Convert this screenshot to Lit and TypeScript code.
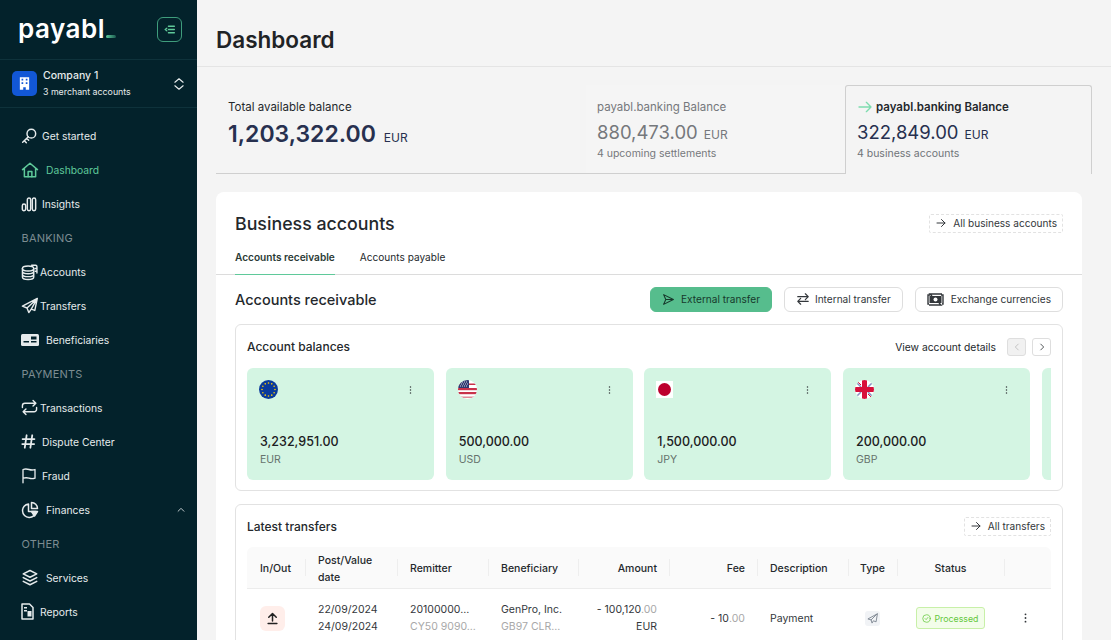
import { LitElement, html, css, svg } from 'lit'
import { customElement } from 'lit/decorators.js'

const line = (body: unknown, w = 18, h = 18, vb = '0 0 24 24', sw = 2) => html`<svg
  width=${w} height=${h} viewBox=${vb} fill="none" stroke="currentColor" stroke-width=${sw}
  stroke-linecap="round" stroke-linejoin="round">${body}</svg>`

const icons: Record<string, unknown> = {
  key: line(svg`<circle cx="15.500" cy="8.500" r="6.500"/><path d="M11 13 2.500 21.500M5 19l3 3M8.500 15.500l3 3"/>`, 16, 16, '0 0 24 24', 2.2),
  home: line(svg`<path d="M2 11.500 12 3l10 8.500M4.500 10v11h15V10"/><path d="M9.500 21v-7h5v7"/>`),
  bars: line(svg`<rect x="2" y="12" width="5" height="10" rx="2.500"/><rect x="9.500" y="3" width="5" height="19" rx="2.500"/><rect x="17" y="3" width="5" height="19" rx="2.500"/>`, 16, 16, '0 0 24 24', 2.2),
  coins: line(svg`<ellipse cx="10" cy="7" rx="8" ry="3.500"/><path d="M2 7v12c0 1.900 3.600 3.500 8 3.500s8-1.600 8-3.500V7M2 11c0 1.900 3.600 3.500 8 3.500s8-1.600 8-3.500M2 15c0 1.900 3.600 3.500 8 3.500s8-1.600 8-3.500"/><path d="M15 2.500h5.500a2 2 0 0 1 2 2v9M20 7h2.500M20 11h2.500"/>`, 17, 18),
  plane: line(svg`<path d="M23 2 2 13l6.500 2.500L11 22l3.500-5 5 2zM23 2 8.500 15.500M23 2l-8.500 15"/>`, 17, 17),
  card: html`<svg width="18" height="12" viewBox="0 0 18 12"><rect width="18" height="12" rx="1.500" fill="currentColor"/><rect x="10" y="2.500" width="5.500" height="3" fill="#03222b"/><rect x="2.500" y="7" width="5.500" height="1.500" fill="#03222b"/><rect x="10" y="7" width="5.500" height="1.500" fill="#03222b"/></svg>`,
  swap: line(svg`<path d="M2 12V9.500a3.500 3.500 0 0 1 3.500-3.500H21M17 2l4 4-4 4M22 12v2.500a3.500 3.500 0 0 1-3.500 3.500H3M7 14l-4 4 4 4"/>`, 17, 17),
  hash: line(svg`<path d="M9 2 6 22M18 2l-3 20M2.500 8h19M2 16h19"/>`, 15, 15, '0 0 24 24', 2.8),
  flag: line(svg`<path d="M3 23V3c4-1.500 6-1 9 0s5 1.500 9 0v13c-4 1.500-6 1-9 0s-5-1-9 0"/>`, 16, 17),
  pie: line(svg`<path d="M10 4a9 9 0 1 0 10 10H10z"/><path d="M14 2a8 8 0 0 1 8 8h-8z"/><path d="M14 14h8l-4 6z" fill="currentColor"/>`),
  layers: line(svg`<path d="M12 2 3 6.500l9 4.500 9-4.500zM3 11.500l9 4.500 9-4.500M3 16.500l9 4.500 9-4.500"/>`),
  doc: html`<svg width="13" height="17" viewBox="0 0 13 17"><path d="M1 1h7.500L12 4.500V16H1z" fill="none" stroke="currentColor" stroke-width="1.500" stroke-linejoin="round"/><rect x="3" y="4" width="3" height="1.500" fill="currentColor"/><rect x="3" y="7" width="3" height="1.500" fill="currentColor"/><rect x="6.500" y="8" width="4" height="5.500" fill="currentColor"/></svg>`,
}

const arrowRight = line(svg`<path d="M4 12h16M13 5l7 7-7 7"/>`, 12, 12)
const dots = (h = 8) => html`<svg width="3" height=${h} viewBox="0 0 3 11" fill="currentColor"><circle cx="1.500" cy="1.500" r="1"/><circle cx="1.500" cy="5.500" r="1"/><circle cx="1.500" cy="9.500" r="1"/></svg>`

type NavEntry = { head: string } | { icon: string; label: string; x: number; active?: boolean; chevron?: boolean }

const nav: NavEntry[] = [
  { icon: 'key', label: 'Get started', x: 42 },
  { icon: 'home', label: 'Dashboard', x: 46, active: true },
  { icon: 'bars', label: 'Insights', x: 42 },
  { head: 'BANKING' },
  { icon: 'coins', label: 'Accounts', x: 40 },
  { icon: 'plane', label: 'Transfers', x: 40 },
  { icon: 'card', label: 'Beneficiaries', x: 46 },
  { head: 'PAYMENTS' },
  { icon: 'swap', label: 'Transactions', x: 40 },
  { icon: 'hash', label: 'Dispute Center', x: 42 },
  { icon: 'flag', label: 'Fraud', x: 42 },
  { icon: 'pie', label: 'Finances', x: 46, chevron: true },
  { head: 'OTHER' },
  { icon: 'layers', label: 'Services', x: 46 },
  { icon: 'doc', label: 'Reports', x: 40 },
]

const euStars = Array.from({ length: 12 }, (_, i) => {
  const a = (i * Math.PI) / 6
  return svg`<circle cx=${9.5 + 6.5 * Math.cos(a)} cy=${9.5 + 6.5 * Math.sin(a)} r=".8" fill="#ffcc00"/>`
})

const flags: Record<string, unknown> = {
  EUR: html`<svg width="19" height="19" viewBox="0 0 19 19"><circle cx="9.500" cy="9.500" r="9.500" fill="#0a3a9c"/>${euStars}</svg>`,
  USD: html`<svg width="19" height="19" viewBox="0 0 19 19"><defs><clipPath id="us"><circle cx="9.500" cy="9.500" r="9.500"/></clipPath></defs><g clip-path="url(#us)"><rect width="19" height="19" fill="#fff"/><rect y="8" width="19" height="2.200" fill="#c8324a"/><rect y="12" width="19" height="2.200" fill="#c8324a"/><rect y="16.500" width="19" height="1.500" fill="#e08a98"/><rect y="3.500" width="19" height="1.500" fill="#c8324a"/><rect width="11" height="8" fill="#2f3a70"/><path d="M2 2h7M3 4h7M2 6h7" stroke="#fff" stroke-width=".8" stroke-dasharray="1 1"/></g></svg>`,
  JPY: html`<svg width="17" height="17" viewBox="0 0 17 17"><rect width="17" height="17" fill="#fff"/><circle cx="8.500" cy="8.500" r="6.500" fill="#bc002d"/></svg>`,
  GBP: html`<svg width="19" height="19" viewBox="0 0 19 19"><defs><clipPath id="gb"><circle cx="9.500" cy="9.500" r="9.500"/></clipPath></defs><g clip-path="url(#gb)"><rect width="19" height="19" fill="#fff"/><path d="M2 3l4 4M17 3l-4 4M2 16l4-4M17 16l-4-4" stroke="#8a93c0" stroke-width="1.600"/><path d="M3 2l3 3M16 17l-3-3" stroke="#d80f3a" stroke-width="1"/><rect x="7" width="5" height="19" fill="#d80f3a"/><rect y="7" width="19" height="5" fill="#d80f3a"/></g></svg>`,
}

const accounts = [
  { cur: 'EUR', amount: '3,232,951.00' },
  { cur: 'USD', amount: '500,000.00' },
  { cur: 'JPY', amount: '1,500,000.00' },
  { cur: 'GBP', amount: '200,000.00' },
]

@customElement('app-root')
export class AppRoot extends LitElement {
  static styles = css`
    :host {
      display: flex;
      width: 1111px;
      height: 640px;
      overflow: hidden;
      font-family: 'Inter', 'Liberation Sans', sans-serif;
      background: #f4f4f4;
      color: #24282c;
    }

    /* sidebar */
    .side {
      flex: 0 0 197px;
      box-sizing: border-box;
      background: #03222b;
      color: #e6ebec;
      font-size: 10.300px;
    }
    .brand {
      height: 60px;
      box-sizing: border-box;
      padding: 0 15px 0 18px;
      display: flex;
      align-items: center;
      justify-content: space-between;
      border-bottom: 1px solid #0e323b;
    }
    .logo {
      display: flex;
      align-items: flex-end;
      padding-bottom: 2px;
      font-size: 26px;
      font-weight: 600;
      line-height: 30px;
      color: #fff;
      letter-spacing: 0.5px;
    }
    .logo i {
      width: 10px;
      height: 3px;
      margin: 0 0 6px 1px;
      border-radius: 2px;
      background: linear-gradient(90deg, #5fc99a, #1b5a50);
    }
    .collapse {
      width: 25px;
      height: 25px;
      box-sizing: border-box;
      border: 1px solid #3f9d7c;
      border-radius: 6px;
      display: grid;
      place-items: center;
      color: #5fc99a;
    }
    .company {
      height: 48px;
      box-sizing: border-box;
      padding: 0 11px 0 12px;
      display: flex;
      align-items: center;
      gap: 6px;
      border-bottom: 1px solid #0e323b;
    }
    .company .badge {
      width: 25px;
      height: 25px;
      border-radius: 5px;
      background: #1257d6;
      display: grid;
      place-items: center;
    }
    .company .txt {
      flex: 1;
      line-height: 16px;
    }
    .company .name {
      font-weight: 500;
      font-size: 10.500px;
    }
    .company .sub {
      font-size: 8.800px;
    }
    nav {
      padding-top: 10.500px;
    }
    .item {
      height: 34px;
      padding: 0 11px 0 21px;
      display: flex;
      align-items: center;
    }
    .item .ic {
      display: flex;
      align-items: center;
      flex: none;
    }
    .item .lb {
      flex: 1;
    }
    .item.active {
      color: #5fc99a;
    }
    .head {
      height: 34px;
      padding-left: 21.500px;
      display: flex;
      align-items: center;
      color: #7c8c91;
      font-size: 11px;
      letter-spacing: 0.2px;
    }

    /* main */
    .main {
      flex: 1;
      min-width: 0;
    }
    .top {
      height: 67px;
      box-sizing: border-box;
      padding: 12px 19px 0;
      display: flex;
      align-items: center;
      border-bottom: 1px solid #e4e4e4;
    }
    h1 {
      margin: 0;
      font-size: 22.500px;
      font-weight: 600;
      color: #1f2326;
    }
    .balances {
      margin: 18px 19px;
      height: 89px;
      display: flex;
    }
    .bal {
      box-sizing: border-box;
      border-bottom: 1px solid #cfcfcf;
      padding: 14px 11px 0 12px;
    }
    .bal.total {
      width: 370px;
    }
    .bal.mid {
      width: 259px;
      padding-left: 11px;
      color: #75787c;
      background: #f5f5f5;
    }
    .bal.cur {
      flex: 1;
      height: 89px;
      border: 1px solid #cfcfcf;
      border-bottom: 0;
      border-radius: 3px 3px 0 0;
      padding: 13px 11px 0;
    }
    .bal .label {
      font-size: 11.500px;
      line-height: 16px;
      display: flex;
      align-items: center;
      gap: 3px;
    }
    .bal.cur .label {
      font-weight: 600;
    }
    .bal .num {
      display: flex;
      align-items: baseline;
      gap: 6px;
      font-size: 18.500px;
      line-height: 26px;
      margin-top: 4px;
    }
    .bal.total .num {
      gap: 8px;
      font-size: 23px;
      font-weight: 600;
      line-height: 30px;
      color: #27304f;
    }
    .bal.cur .num {
      color: #27304f;
    }
    .bal .num small {
      font-size: 12px;
      font-weight: 400;
    }
    .bal .note {
      margin-top: -1px;
      font-size: 10.500px;
      line-height: 14px;
    }
    .bal.cur .note {
      color: #6f7378;
    }
    .bal .green {
      color: #7ddcae;
      display: flex;
    }

    .card {
      margin: 0 29px 0 19px;
      background: #fff;
      border-radius: 8px 8px 0 0;
      height: 460px;
    }
    .card-head {
      height: 62px;
      box-sizing: border-box;
      padding: 0 19px;
      display: flex;
      align-items: center;
      justify-content: space-between;
    }
    .card-head h2 {
      margin: 0;
      font-size: 17.800px;
      font-weight: 500;
    }
    .link {
      display: inline-flex;
      align-items: center;
      gap: 6px;
      height: 19px;
      box-sizing: border-box;
      padding: 0 5px;
      border: 1px dashed #e2e2e2;
      border-radius: 2px;
      font-size: 10.100px;
      color: #33373b;
    }
    .tabs {
      display: flex;
      height: 24px;
      margin-top: -4px;
      gap: 25px;
      padding: 0 19px;
      border-bottom: 1px solid #dcdcdc;
      font-size: 10.100px;
      line-height: 14px;
    }
    .tab.on {
      font-weight: 600;
      height: 24px;
      border-bottom: 1px solid #5fc99a;
      color: #2a3a35;
    }
    .section {
      padding: 0 19px;
    }
    .actions {
      height: 48px;
      padding-bottom: 1px;
      display: flex;
      align-items: center;
      gap: 12px;
    }
    .actions h3 {
      margin: 0 auto 0 0;
      font-size: 14.500px;
      font-weight: 500;
    }
    .btn {
      height: 25px;
      box-sizing: border-box;
      padding: 0 11px;
      display: inline-flex;
      align-items: center;
      gap: 6px;
      border: 1px solid #dedede;
      border-radius: 6px;
      font-size: 10.100px;
      color: #33373b;
    }
    .btn.swap {
      gap: 5px;
    }
    .btn.exchange {
      gap: 7px;
    }
    .btn.primary {
      background: #56bd8d;
      border-color: #56bd8d;
      color: #17392c;
    }
    .box {
      border: 1px solid #e2e2e2;
      border-radius: 6px;
      padding: 0 11px;
    }
    .box.bal-box {
      height: 167px;
      box-sizing: border-box;
      margin-bottom: 13px;
    }
    .box-head {
      height: 43px;
      display: flex;
      align-items: center;
      gap: 6px;
    }
    .list .box-head {
      height: 42px;
    }
    .box-head h4 {
      margin: 0 auto 0 0;
      font-size: 12px;
      font-weight: 500;
    }
    .box-head .view {
      font-size: 10.300px;
      margin-right: 5px;
    }
    .page {
      width: 19px;
      height: 18px;
      box-sizing: border-box;
      border: 1px solid #dedede;
      border-radius: 3px;
      display: grid;
      place-items: center;
      color: #33373b;
    }
    .page.off {
      background: #f1f1f1;
      color: #bbb;
    }
    .wallets {
      display: flex;
      gap: 11.670px;
      overflow: hidden;
    }
    .wallet {
      flex: 0 0 187px;
      height: 112px;
      box-sizing: border-box;
      background: #d4f5e3;
      border-radius: 6px;
      padding: 12px 22px 0 12px;
      display: flex;
      flex-direction: column;
    }
    .wallet .row {
      height: 19px;
      display: flex;
      align-items: center;
      justify-content: space-between;
      color: #33373b;
    }
    .wallet .amt {
      margin: 34px 0 0 1px;
      font-size: 12.500px;
      font-weight: 500;
      line-height: 18px;
      color: #1c2022;
    }
    .wallet .cur {
      margin: 1px 0 0 1px;
      font-size: 10.500px;
      line-height: 16px;
      color: #66736c;
    }
    .box.list {
      height: 200px;
      box-sizing: border-box;
    }
    .grid {
      display: grid;
      grid-template-columns: 58px 92px 91px 90px 91px 88px 91px 49px 107px 47px;
      font-size: 10.500px;
      line-height: 17px;
    }
    .grid.thead {
      height: 42px;
      padding-top: 2px;
      background: #fafafa;
      border-bottom: 1px solid #ececec;
      border-radius: 6px 6px 0 0;
      font-weight: 500;
      box-sizing: border-box;
    }
    .grid > div {
      box-sizing: border-box;
      display: flex;
      align-items: center;
      padding-left: 13px;
    }
    .thead > div {
      position: relative;
    }
    .thead > div + div::before {
      content: '';
      position: absolute;
      left: 0;
      top: 10px;
      bottom: 12px;
      width: 1px;
      background: #eee;
    }
    .grid .end {
      justify-content: flex-end;
      padding: 0 12px 0 0;
      text-align: right;
    }
    .grid .mid {
      justify-content: center;
      padding: 0;
    }
    .grid .menu {
      padding: 0 4px 0 0;
      justify-content: center;
    }
    .tbody {
      height: 58px;
      color: #33373b;
    }
    .grid > .stack {
      display: block;
      padding-top: 12px;
    }
    .grid > .stack.end {
      padding: 12px 12px 0 0;
    }
    .dim {
      color: #a8a8a8;
    }
    .out {
      width: 25px;
      height: 25px;
      border-radius: 6px;
      background: #ffeeea;
      color: #222;
      display: grid;
      place-items: center;
    }
    .type {
      width: 15px;
      height: 15px;
      border-radius: 3px;
      background: #f1f3f6;
      color: #7d8590;
      display: grid;
      place-items: center;
    }
    .status {
      height: 22px;
      box-sizing: border-box;
      padding: 0 5px;
      display: inline-flex;
      align-items: center;
      gap: 3px;
      border: 1px solid #c8f0a8;
      border-radius: 3px;
      background: #f3fdea;
      color: #64c83c;
      font-size: 8.800px;
    }
  `

  private renderNav(e: NavEntry) {
    if ('head' in e) return html`<div class="head">${e.head}</div>`
    return html`<div class="item ${e.active ? 'active' : ''}">
      <span class="ic" style="width:${e.x - 21}px">${icons[e.icon]}</span>
      <span class="lb">${e.label}</span>
      ${e.chevron ? line(svg`<path d="M5 15l7-7 7 7"/>`, 10, 10) : ''}
    </div>`
  }

  render() {
    return html`
      <aside class="side">
        <div class="brand">
          <div class="logo">payabl<i></i></div>
          <div class="collapse">${line(svg`<path d="M10 6h11M10 12h11M10 18h11M7 9.500 4 12l3 2.500"/>`, 13, 13, '0 0 24 24', 2.4)}</div>
        </div>
        <div class="company">
          <div class="badge">
            <svg width="11" height="13" viewBox="0 0 13 15"><path fill="#fff" fill-rule="evenodd" d="M1 0h11v15H8v-3H5v3H1zM3 2v2h2V2zm5 0v2h2V2zM3 6v2h2V6zm5 0v2h2V6z"/></svg>
          </div>
          <div class="txt">
            <div class="name">Company 1</div>
            <div class="sub">3 merchant accounts</div>
          </div>
          ${line(svg`<path d="M5 9l7-6 7 6M5 15l7 6 7-6"/>`, 14, 14)}
        </div>
        <nav>${nav.map((e) => this.renderNav(e))}</nav>
      </aside>

      <main class="main">
        <header class="top"><h1>Dashboard</h1></header>

        <section class="balances">
          <div class="bal total">
            <div class="label">Total available balance</div>
            <div class="num">1,203,322.00 <small>EUR</small></div>
          </div>
          <div class="bal mid">
            <div class="label">payabl.banking Balance</div>
            <div class="num">880,473.00 <small>EUR</small></div>
            <div class="note">4 upcoming settlements</div>
          </div>
          <div class="bal cur">
            <div class="label"><span class="green">${line(svg`<path d="M3 12h18M14 5l7 7-7 7"/>`, 16, 16)}</span>payabl.banking Balance</div>
            <div class="num">322,849.00 <small>EUR</small></div>
            <div class="note">4 business accounts</div>
          </div>
        </section>

        <section class="card">
          <div class="card-head">
            <h2>Business accounts</h2>
            <span class="link">${arrowRight}All business accounts</span>
          </div>
          <div class="tabs">
            <span class="tab on">Accounts receivable</span>
            <span class="tab">Accounts payable</span>
          </div>
          <div class="section">
            <div class="actions">
              <h3>Accounts receivable</h3>
              <span class="btn primary">${line(svg`<path d="M3 3l18 9-18 9 4-9zM7 12h14"/>`, 13, 13)}External transfer</span>
              <span class="btn swap">${line(svg`<path d="M3 8h18M16 3l5 5-5 5M21 16H3M8 11l-5 5 5 5"/>`, 14, 14)}Internal transfer</span>
              <span class="btn exchange">
                <svg width="17" height="15" viewBox="0 0 17 15"><path fill="none" stroke="currentColor" stroke-width="1.400" d="M3 3H1v9h1M14 3h2v9h-1M2 13h12l-2-2M15 2H3l2 2"/><rect x="2.500" y="4" width="12" height="7" fill="currentColor"/><circle cx="8.500" cy="7.500" r="2" fill="#fff"/></svg>
                Exchange currencies
              </span>
            </div>

            <div class="box bal-box">
              <div class="box-head">
                <h4>Account balances</h4>
                <span class="view">View account details</span>
                <span class="page off">${line(svg`<path d="M15 5l-7 7 7 7"/>`, 10, 10)}</span>
                <span class="page">${line(svg`<path d="M9 5l7 7-7 7"/>`, 10, 10)}</span>
              </div>
              <div class="wallets">
                ${accounts.map(
                  (a) => html`<div class="wallet">
                    <div class="row">${flags[a.cur]}${dots()}</div>
                    <div class="amt">${a.amount}</div>
                    <div class="cur">${a.cur}</div>
                  </div>`,
                )}
                <div class="wallet"></div>
              </div>
            </div>

            <div class="box list">
              <div class="box-head">
                <h4>Latest transfers</h4>
                <span class="link">${arrowRight}All transfers</span>
              </div>
              <div class="grid thead">
                <div>In/Out</div>
                <div>Post/Value<br />date</div>
                <div>Remitter</div>
                <div>Beneficiary</div>
                <div class="end">Amount</div>
                <div class="end">Fee</div>
                <div>Description</div>
                <div class="mid">Type</div>
                <div class="mid">Status</div>
                <div></div>
              </div>
              <div class="grid tbody">
                <div><span class="out">${line(svg`<path d="M12 16V5M6 10l6-6 6 6M5 20h14"/>`, 15, 15, '0 0 24 24', 2.4)}</span></div>
                <div class="stack"><div>22/09/2024</div><div>24/09/2024</div></div>
                <div class="stack"><div>20100000...</div><div class="dim">CY50 9090...</div></div>
                <div class="stack"><div>GenPro, Inc.</div><div class="dim">GB97 CLR...</div></div>
                <div class="stack end"><div>- 100,120<span class="dim">.00</span></div><div>EUR</div></div>
                <div class="end">- 10<span class="dim">.00</span></div>
                <div>Payment</div>
                <div class="mid"><span class="type">${line(svg`<path d="M22 2 2 13l7 2 2 7 3-5 5 2zM22 2 9 15"/>`, 11, 11)}</span></div>
                <div class="mid"><span class="status">${line(svg`<circle cx="12" cy="12" r="10"/><path d="M8 12l3 3 5-6"/>`, 9, 9)}Processed</span></div>
                <div class="menu">${dots(10)}</div>
              </div>
            </div>
          </div>
        </section>
      </main>
    `
  }
}

declare global {
  interface HTMLElementTagNameMap {
    'app-root': AppRoot
  }
}
